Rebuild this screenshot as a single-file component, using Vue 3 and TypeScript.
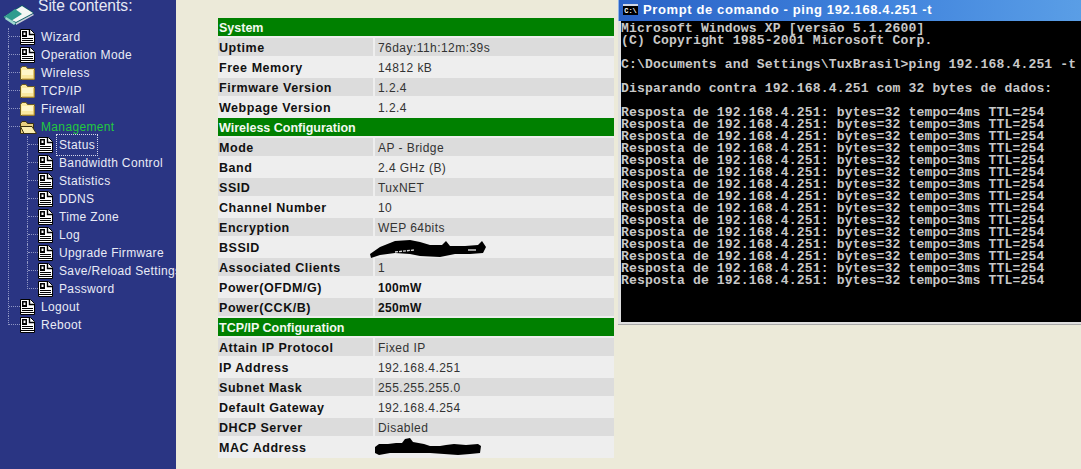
<script setup lang="ts">
interface Node { label: string; kind: 'doc' | 'folder' | 'open'; focus?: boolean; children?: Node[] }
interface Row { label?: string; value?: string; head?: string; strong?: boolean; dark?: boolean; mask?: 'bssid' | 'mac' }

const doc = (label: string, focus = false): Node => ({ label, kind: 'doc', focus })
const tree: Node[] = [
  doc('Wizard'),
  doc('Operation Mode'),
  { label: 'Wireless', kind: 'folder' },
  { label: 'TCP/IP', kind: 'folder' },
  { label: 'Firewall', kind: 'folder' },
  {
    label: 'Management', kind: 'open',
    children: [
      doc('Status', true), doc('Bandwidth Control'), doc('Statistics'), doc('DDNS'), doc('Time Zone'),
      doc('Log'), doc('Upgrade Firmware'), doc('Save/Reload Settings'), doc('Password'),
    ],
  },
  doc('Logout'),
  doc('Reboot'),
]

const source: Row[] = [
  { head: 'System' },
  { label: 'Uptime', value: '76day:11h:12m:39s' },
  { label: 'Free Memory', value: '14812 kB' },
  { label: 'Firmware Version', value: '1.2.4' },
  { label: 'Webpage Version', value: '1.2.4' },
  { head: 'Wireless Configuration' },
  { label: 'Mode', value: 'AP - Bridge' },
  { label: 'Band', value: '2.4 GHz (B)' },
  { label: 'SSID', value: 'TuxNET' },
  { label: 'Channel Number', value: '10' },
  { label: 'Encryption', value: 'WEP 64bits' },
  { label: 'BSSID', mask: 'bssid' },
  { label: 'Associated Clients', value: '1' },
  { label: 'Power(OFDM/G)', value: '100mW', strong: true },
  { label: 'Power(CCK/B)', value: '250mW', strong: true },
  { head: 'TCP/IP Configuration' },
  { label: 'Attain IP Protocol', value: 'Fixed IP' },
  { label: 'IP Address', value: '192.168.4.251' },
  { label: 'Subnet Mask', value: '255.255.255.0' },
  { label: 'Default Gateway', value: '192.168.4.254' },
  { label: 'DHCP Server', value: 'Disabled' },
  { label: 'MAC Address', mask: 'mac' },
]

let since = 0
const rows: Row[] = source.map((r) => {
  if (r.head) {
    since = 0
    return r
  }
  since += 1
  return { ...r, dark: since % 2 === 1 }
})

const reply = (ms: number) => `Resposta de 192.168.4.251: bytes=32 tempo=${ms}ms TTL=254`
const consoleLines: string[] = [
  'Microsoft Windows XP [versão 5.1.2600]',
  '(C) Copyright 1985-2001 Microsoft Corp.',
  '',
  'C:\\Documents and Settings\\TuxBrasil>ping 192.168.4.251 -t',
  '',
  'Disparando contra 192.168.4.251 com 32 bytes de dados:',
  '',
  reply(4),
  ...Array.from({ length: 14 }, () => reply(3)),
]

const groups = (n: Node) => n.children ?? []
</script>

<template>
  <div class="page">
    <aside class="side">
      <header class="brand">
        <svg class="book" width="33" height="22" viewBox="0 0 33 22">
          <path d="M1 13 L20 1 L32 9 L14 21 Z" fill="#0b5f63" />
          <path d="M2 13 L20 2 L31 9 L14 18 Z" fill="#f4f6f4" />
          <path d="M2 13 L13 5 L20 10 L9 17 Z" fill="#2f9c8e" />
          <path d="M3 15 L12 21 L14 19 L4 13 Z" fill="#9fd8d0" />
          <path d="M14 19 L31 10 L32 11 L14 21 Z" fill="#c9ccd8" />
        </svg>
        <span class="brand-title">Site contents:</span>
      </header>

      <ul class="tree">
        <li v-for="(n, i) in tree" :key="n.label" :class="{ last: i === tree.length - 1 }">
          <div class="row">
            <span class="elbow"></span>
            <svg v-if="n.kind === 'doc'" class="icon" width="15" height="16" viewBox="0 0 15 16">
              <path d="M0.5 0.5 H10.5 L14.5 4.5 V15.5 H0.5 Z" fill="#fff" stroke="#000" />
              <path d="M2 2 H7 V8 H2 Z M3.5 3.5 V6 H5.5 V3.5 Z" fill="#000" fill-rule="evenodd" />
              <path d="M9.5 1 V5.5 H14" fill="none" stroke="#000" stroke-width="1.4" />
              <path d="M2 9.5 H13 M2 11.5 H13 M1 13.5 H14" stroke="#000" />
            </svg>
            <svg v-else-if="n.kind === 'folder'" class="icon" width="15" height="14" viewBox="0 0 15 14">
              <path d="M0.5 2.5 L2 0.5 H6 L7.5 2.5 H14.5 V13.5 H0.5 Z" fill="#fbe9a0" stroke="#6b5a20" />
              <path d="M2 4 H13 V9 H2 Z" fill="#fff6c8" />
              <path d="M14 4 V13 H2" fill="none" stroke="#c9a040" />
            </svg>
            <svg v-else class="icon" width="17" height="13" viewBox="0 0 17 13">
              <path d="M0.5 2.5 L2 0.5 H6 L7.5 2.5 H13.5 V12.5 H0.5 Z" fill="#e8cf80" stroke="#3a3010" />
              <path d="M0.5 5.5 H12 L16.5 12.5 H4 Z" fill="#fbeeb0" stroke="#3a3010" />
            </svg>
            <span class="label" :class="{ active: n.kind === 'open' }">{{ n.label }}</span>
          </div>
          <ul v-if="groups(n).length" class="sub">
            <li v-for="(c, j) in groups(n)" :key="c.label" :class="{ last: j === groups(n).length - 1 }">
              <div class="row">
                <span class="elbow short"></span>
                <svg class="icon" width="15" height="16" viewBox="0 0 15 16">
                  <path d="M0.5 0.5 H10.5 L14.5 4.5 V15.5 H0.5 Z" fill="#fff" stroke="#000" />
                  <path d="M2 2 H7 V8 H2 Z M3.5 3.5 V6 H5.5 V3.5 Z" fill="#000" fill-rule="evenodd" />
                  <path d="M9.5 1 V5.5 H14" fill="none" stroke="#000" stroke-width="1.4" />
                  <path d="M2 9.5 H13 M2 11.5 H13 M1 13.5 H14" stroke="#000" />
                </svg>
                <span class="label" :class="{ focus: c.focus }">{{ c.label }}</span>
              </div>
            </li>
          </ul>
        </li>
      </ul>
    </aside>

    <main class="main">
      <table class="info">
        <colgroup>
          <col class="col-key" />
          <col />
        </colgroup>
        <tbody>
          <tr v-for="r in rows" :key="r.head ?? r.label" :class="{ dark: r.dark }">
            <th v-if="r.head" class="head" colspan="2">{{ r.head }}</th>
            <template v-else>
              <td class="key">{{ r.label }}</td>
              <td class="val" :class="{ strong: r.strong }">
                {{ r.value }}
                <svg v-if="r.mask === 'bssid'" class="mask" width="116" height="20" viewBox="0 0 116 20">
                  <path d="M0 15 L10 8 L25 2 L40 1 L50 3 L60 6 L72 6 L76 2 L80 7 L95 7 L108 6 L112 2 L116 8 L113 14 L100 15 L85 15 L70 18 L50 17 L40 15 L25 14 L10 16 L1 19 Z" fill="#000" />
                  <path d="M25 13 L44 11" stroke="#ddd" stroke-width="1.3" stroke-dasharray="3 1" />
                  <path d="M98 11 L106 11" stroke="#ddd" stroke-width="1.4" />
                </svg>
                <svg v-else-if="r.mask === 'mac'" class="mask mac" width="108" height="18" viewBox="0 0 108 18">
                  <path d="M1 9 L5 6 L14 6 L22 5 L28 5 L31 1 L36 0 L39 4 L50 6 L56 8 L66 8 L72 7 L80 6 L92 7 L104 6 L107 8 L106 15 L96 16 L84 17 L70 16 L56 15 L40 15 L28 15 L16 15 L5 17 L1 15 Z" fill="#000" />
                </svg>
              </td>
            </template>
          </tr>
        </tbody>
      </table>
    </main>

    <section class="cmd">
      <div class="titlebar">
        <span class="cmd-icon">C:\</span>
        <span class="cmd-title">Prompt de comando - ping 192.168.4.251 -t</span>
      </div>
      <pre class="screen"><div v-for="(l, i) in consoleLines" :key="i" class="line">{{ l }}</div></pre>
    </section>
  </div>
</template>

<style scoped>
.page {
  display: flex;
  width: 1081px;
  height: 469px;
  overflow: hidden;
  background: #ecead9;
  font-family: "Liberation Sans", Arial, sans-serif;
}
.side {
  flex: 0 0 176px;
  background: #2a3583;
  color: #fff;
  overflow: hidden;
}
.brand {
  display: flex;
  height: 28px;
  padding-left: 2px;
  gap: 3px;
}
.book { margin-top: 4px; flex: none; }
.brand-title {
  font-size: 15.6px;
  line-height: 12px;
  color: #e6e8f4;
  white-space: nowrap;
}
ul { list-style: none; margin: 0; padding: 0; }
.tree { margin-left: 8px; }
.tree li { border-left: 1px dotted #8f96c4; }
.tree li.last { border-left-color: transparent; }
.sub { margin-left: 18px; }
.row {
  display: flex;
  align-items: center;
  height: 18px;
  white-space: nowrap;
}
.elbow {
  flex: none;
  width: 11px;
  height: 9px;
  align-self: flex-start;
  border-bottom: 1px dotted #8f96c4;
  box-sizing: border-box;
}
.last > .row > .elbow { margin-left: -1px; width: 12px; border-left: 1px dotted #8f96c4; }
.elbow.short { width: 10px; }
.last > .row > .elbow.short { width: 11px; }
.icon { flex: none; }
.label {
  font-size: 12px;
  letter-spacing: 0.35px;
  line-height: 16px;
  margin-left: 6px;
  color: #e9ebf6;
}
.label.active { color: #22c93e; margin-left: 4px; }
.label.focus {
  outline: 1px dotted #d5d8ea;
  outline-offset: 2px;
}
.main {
  flex: 0 0 442px;
  padding: 16px 0 0 42px;
  box-sizing: border-box;
}
.info {
  width: 396px;
  border-collapse: separate;
  border-spacing: 0 2px;
  background: linear-gradient(#ecead9 2px, #eeeeee 2px);
  table-layout: fixed;
}
.col-key { width: 157px; }
.info td, .info th {
  box-sizing: border-box;
  height: 18px;
  padding: 2px 0 0 1px;
  font-size: 12px;
  line-height: 16px;
  letter-spacing: 0.45px;
  text-align: left;
  white-space: nowrap;
}
.info tr.dark td { background: #dcdcdc; }
.info .head {
  background: #008000;
  color: #f2f8f0;
  font-weight: bold;
  font-size: 12.5px;
  letter-spacing: 0;
}
.info .key {
  font-weight: bold;
  font-size: 12.5px;
  letter-spacing: 0.55px;
  color: #111;
  border-right: 2px solid #eeeeee;
}
.info .val {
  position: relative;
  padding-left: 3px;
  color: #333;
}
.info .val.strong { font-weight: bold; color: #111; letter-spacing: 0.3px; }
.mask {
  position: absolute;
  left: -5px;
  top: 1px;
}
.mask.mac { left: -1px; top: 0; }
.cmd {
  flex: 1;
  align-self: flex-start;
  height: 325px;
  box-sizing: border-box;
  background: #dfdfdf;
  border-bottom: 1px solid #aaa;
  min-width: 0;
}
.titlebar {
  display: flex;
  align-items: center;
  height: 21px;
  padding: 0 0 3px 4px;
  gap: 5px;
  box-sizing: border-box;
  background: linear-gradient(90deg, #2a62c6 0%, #3f82dc 55%, #5a9ee6 100%);
  border-left: 1px solid #8fb4e8;
}
.cmd-icon {
  width: 15px;
  height: 11px;
  background: #000;
  border-top: 2px solid #cfd6e6;
  color: #fff;
  font: bold 7px/10px "Liberation Mono", monospace;
  text-align: center;
  box-sizing: border-box;
}
.cmd-title {
  color: #fff;
  font-size: 13px;
  font-weight: bold;
  letter-spacing: 0.62px;
  white-space: nowrap;
}
.screen {
  margin: 0 0 0 3px;
  height: 301px;
  padding-top: 2px;
  box-sizing: border-box;
  background: #000;
  color: #c8c8c8;
  font-family: "Liberation Mono", monospace;
  font-size: 13.08px;
  font-weight: bold;
  letter-spacing: 0.14px;
  overflow: hidden;
}
.line {
  height: 12px;
  line-height: 12px;
  white-space: pre;
}
</style>
